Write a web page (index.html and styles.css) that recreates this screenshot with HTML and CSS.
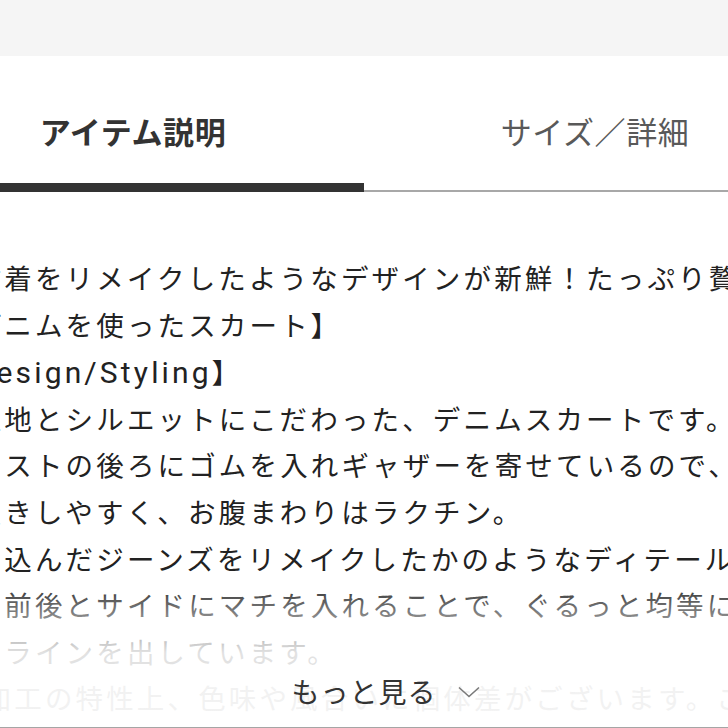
FILE: index.html
```html
<!DOCTYPE html>
<html>
<head>
    <title>アイテム説明</title>
    <link rel="stylesheet" href="styles.css">
</head>

<body>

    <div class="topband"></div>

    <div class="page">
        <div class="tabs">
            <div class="tab active">アイテム説明</div>
            <div class="tab">サイズ／詳細</div>
        </div>

        <div class="desc">
            <div class="descText">
                <p>【古着をリメイクしたようなデザインが新鮮！たっぷり贅沢に</p>
                <p>にデニムを使ったスカート】</p>
                <p>【<span class="en">Design/Styling</span>】</p>
                <p>・生地とシルエットにこだわった、デニムスカートです。</p>
                <p>ウエストの後ろにゴムを入れギャザーを寄せているので、着脱</p>
                <p>で履きしやすく、お腹まわりはラクチン。</p>
                <p>穿き込んだジーンズをリメイクしたかのようなディテール。</p>
                <p>また前後とサイドにマチを入れることで、ぐるっと均等にフレア</p>
                <p>レアラインを出しています。</p>
                <p class="last">※ 加工の特性上、色味や風合いに個体差がございます。ご了承ください。</p>
            </div>
            <div class="fade"></div>
            <div class="more">
                <span>もっと見る</span>
                <svg class="chev" width="22" height="12" viewBox="0 0 22 12"><polyline points="1,1.5 11,10.5 21,1.5" fill="none" stroke="#7a7a7a" stroke-width="1.6"/></svg>
            </div>
        </div>
    </div>

</body>
</html>
```

FILE: styles.css
```css
html,
body {
    margin: 0;
    height: 100%;
    background: #fff;
    overflow: hidden;
    font-family: "Noto Sans CJK JP", "Noto Sans", sans-serif;
}

.topband {
    height: 56px;
    background: #f5f5f5;
}

/* the screenshot is a crop: page is wider and shifted left */
.page {
    width: 924px;
    margin-left: -98px;
}

.tabs {
    display: grid;
    grid-template-columns: 1fr 1fr;
}

.tab {
    padding: 52px 0 30px;
    font-size: 31px;
    line-height: 45px;
    letter-spacing: 0.6px;
    text-align: center;
    color: #595959;
    border-bottom: 2px solid #a8a8a8;
}

.tab.active {
    color: #333;
    font-weight: 700;
    border-bottom: 9px solid #333;
}

.desc {
    position: relative;
    margin-top: 65px;
    padding-bottom: 3px;
    border-bottom: 2px solid #a5a5a5;
}

.descText {
    padding-left: 41px;
    color: #222;
    font-family: Roboto, "Noto Sans CJK JP", sans-serif;
    font-size: 27.5px;
    line-height: 46.6px;
    letter-spacing: 3.15px;
}

.descText p {
    margin: 0;
    white-space: nowrap;
}

.descText p.last {
    color: #999;
}

.descText .en {
    font-size: 30px;
}

/* white fade over the clipped text */
.fade {
    position: absolute;
    left: 0;
    right: 0;
    bottom: 0;
    height: 146px;
    background: linear-gradient(to bottom, rgba(255,255,255,0) 0, rgba(255,255,255,.38) 28px, rgba(255,255,255,.87) 72px, rgba(255,255,255,.87) 100%);
}

.more {
    position: absolute;
    left: 0;
    right: 0;
    top: 412px;
    display: flex;
    justify-content: center;
    align-items: center;
    gap: 21px;
    padding-left: 43px;
    font-size: 28px;
    line-height: 44px;
    letter-spacing: 1px;
    color: #333;
}

.chev {
    display: block;
    margin-top: 2px;
}
```
